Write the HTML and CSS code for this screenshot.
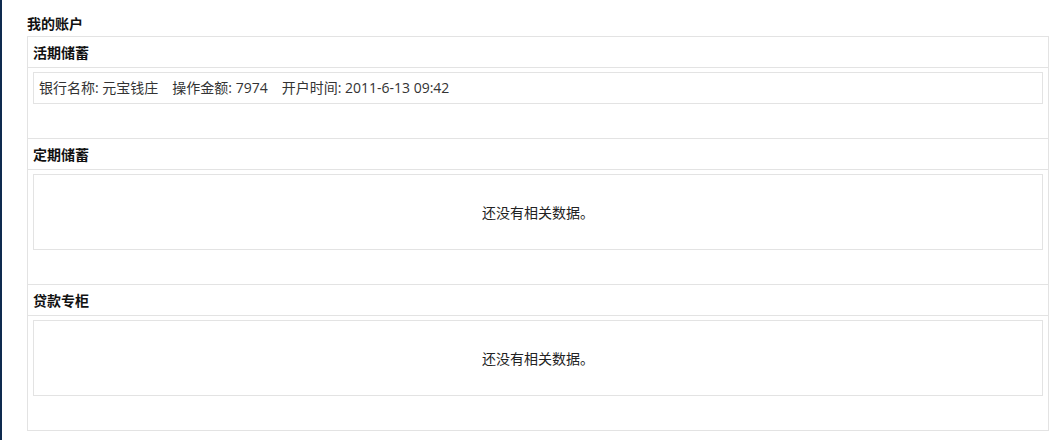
FILE: index.html
```html
<!DOCTYPE html>
<html lang="zh-CN">
<head>
<meta charset="utf-8">
<title>我的账户</title>
<link rel="stylesheet" href="styles.css">
</head>
<body>
<div class="page">
  <h1 class="title">我的账户</h1>
  <div class="account">
    <section class="sec">
      <h2 class="sec-head">活期储蓄</h2>
      <div class="sec-body">
        <div class="box box-line"><span class="field">银行名称: 元宝钱庄</span><span class="field">操作金额: 7974</span><span class="field">开户时间: 2011-6-13 09:42</span></div>
      </div>
    </section>
    <section class="sec">
      <h2 class="sec-head">定期储蓄</h2>
      <div class="sec-body">
        <div class="box box-empty">还没有相关数据。</div>
      </div>
    </section>
    <section class="sec">
      <h2 class="sec-head">贷款专柜</h2>
      <div class="sec-body">
        <div class="box box-empty">还没有相关数据。</div>
      </div>
    </section>
  </div>
</div>
</body>
</html>
```

FILE: styles.css
```css
html, body {
  margin: 0;
  padding: 0;
  background: #ffffff;
}
body {
  font-family: "Noto Sans CJK SC", "DejaVu Sans", sans-serif;
  font-size: 14px;
  color: #333333;
}
.page {
  min-height: 440px;
  box-sizing: border-box;
  border-left: 2px solid #0e2a4f;
  padding: 13px 0 0 25px;
  width: 1049px;
}
.title {
  margin: 0 0 3px 0;
  font-size: 14px;
  line-height: 20px;
  font-weight: bold;
  color: #111111;
}
.account {
  width: 1022px;
  box-sizing: border-box;
  border: 1px solid #e3e3e3;
  border-top: none;
}
.sec-head {
  margin: 0;
  padding: 0 5px;
  font-size: 14px;
  line-height: 30px;
  font-weight: bold;
  color: #111111;
  border-top: 1px solid #e3e3e3;
  border-bottom: 1px solid #e3e3e3;
}
.sec-body {
  padding: 4px 5px 34px 5px;
}
.box {
  border: 1px solid #e3e3e3;
}
.box-line {
  padding: 0 5px;
  line-height: 30px;
  color: #333333;
  font-family: "Open Sans", "Noto Sans CJK SC", sans-serif;
}
.field {
  margin-right: 14px;
}
.box-empty {
  height: 74px;
  line-height: 74px;
  text-align: center;
  color: #222222;
}
```
